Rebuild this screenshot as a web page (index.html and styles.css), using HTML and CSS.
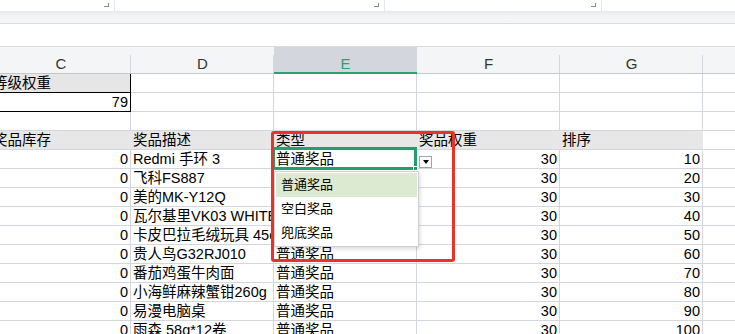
FILE: index.html
```html
<!DOCTYPE html>
<html lang="zh-CN">
<head>
<meta charset="utf-8">
<title>奖品配置</title>
<link rel="stylesheet" href="styles.css">
</head>
<body>
<div class="topstrip">
  <div class="ts ts1"><span class="mark"></span></div>
  <div class="ts ts2"><span class="mark"></span></div>
  <div class="ts ts3"><span class="mark"></span></div>
  <div class="ts ts4"></div>
</div>
<div class="band"></div>
<div class="blank"></div>

<div class="sheet">
  <div class="row hdr">
    <div class="c cC">C</div>
    <div class="c cD">D</div>
    <div class="c cE active">E</div>
    <div class="c cF">F</div>
    <div class="c cG">G</div>
    <div class="c cH"></div>
  </div>
  <div class="row">
    <div class="c cC t boxed fill">等级权重</div>
    <div class="c cD"></div><div class="c cE"></div><div class="c cF"></div><div class="c cG"></div><div class="c cH"></div>
  </div>
  <div class="row">
    <div class="c cC n boxed">79</div>
    <div class="c cD"></div><div class="c cE"></div><div class="c cF"></div><div class="c cG"></div><div class="c cH"></div>
  </div>
  <div class="row">
    <div class="c cC"></div><div class="c cD"></div><div class="c cE"></div><div class="c cF"></div><div class="c cG"></div><div class="c cH"></div>
  </div>
  <div class="row labels">
    <div class="c cC t">奖品库存</div>
    <div class="c cD t">奖品描述</div>
    <div class="c cE t">类型</div>
    <div class="c cF t">奖品权重</div>
    <div class="c cG t">排序</div>
    <div class="c cH"></div>
  </div>
  <div class="row"><div class="c cC n">0</div><div class="c cD t">Redmi 手环 3</div><div class="c cE t">普通奖品</div><div class="c cF n">30</div><div class="c cG n">10</div><div class="c cH"></div></div>
  <div class="row"><div class="c cC n">0</div><div class="c cD t">飞科FS887</div><div class="c cE t"></div><div class="c cF n">30</div><div class="c cG n">20</div><div class="c cH"></div></div>
  <div class="row"><div class="c cC n">0</div><div class="c cD t">美的MK-Y12Q</div><div class="c cE t"></div><div class="c cF n">30</div><div class="c cG n">30</div><div class="c cH"></div></div>
  <div class="row"><div class="c cC n">0</div><div class="c cD t">瓦尔基里VK03 WHITE</div><div class="c cE t"></div><div class="c cF n">30</div><div class="c cG n">40</div><div class="c cH"></div></div>
  <div class="row"><div class="c cC n">0</div><div class="c cD t">卡皮巴拉毛绒玩具 45cm</div><div class="c cE t"></div><div class="c cF n">30</div><div class="c cG n">50</div><div class="c cH"></div></div>
  <div class="row"><div class="c cC n">0</div><div class="c cD t">贵人鸟G32RJ010</div><div class="c cE t">普通奖品</div><div class="c cF n">30</div><div class="c cG n">60</div><div class="c cH"></div></div>
  <div class="row"><div class="c cC n">0</div><div class="c cD t">番茄鸡蛋牛肉面</div><div class="c cE t">普通奖品</div><div class="c cF n">30</div><div class="c cG n">70</div><div class="c cH"></div></div>
  <div class="row"><div class="c cC n">0</div><div class="c cD t">小海鲜麻辣蟹钳260g</div><div class="c cE t">普通奖品</div><div class="c cF n">30</div><div class="c cG n">80</div><div class="c cH"></div></div>
  <div class="row"><div class="c cC n">0</div><div class="c cD t">易漫电脑桌</div><div class="c cE t">普通奖品</div><div class="c cF n">30</div><div class="c cG n">90</div><div class="c cH"></div></div>
  <div class="row"><div class="c cC n">0</div><div class="c cD t">雨森 58g*12卷</div><div class="c cE t">普通奖品</div><div class="c cF n">30</div><div class="c cG n">100</div><div class="c cH"></div></div>
</div>

<div class="selection"><span class="handle"></span></div>
<div class="ddbtn"><span class="tri"></span></div>
<ul class="ddlist">
  <li class="item on">普通奖品</li>
  <li class="item">空白奖品</li>
  <li class="item">兜底奖品</li>
</ul>
<div class="annot"></div>
</body>
</html>
```
FILE: styles.css
```css
* { box-sizing: border-box; }
html, body { margin: 0; padding: 0; }
body {
  position: relative;
  width: 735px;
  height: 334px;
  overflow: hidden;
  background: #fff;
  font-family: "Liberation Sans", "Noto Sans CJK SC", sans-serif;
  font-size: 14.5px;
  color: #000;
}

/* top strip */
.topstrip { display: flex; height: 11px; }
.ts { display: flex; justify-content: flex-end; border-right: 1px solid #e6e7ea; height: 11px; }
.ts1 { width: 115px; }
.ts2 { width: 270px; }
.ts3 { width: 217px; }
.ts4 { flex: 1; border-right: none; }
.mark {
  width: 5px; height: 4px; margin-top: 3px; margin-right: 5px;
  border-right: 1px solid #8a8a8a; border-bottom: 1px solid #8a8a8a;
}
.band {
  height: 13px;
  background: linear-gradient(#e8e9ec, #f3f4f6 40%, #f5f6f8);
  border-bottom: 1px solid #d9dbdf;
}
.blank { height: 23px; border-bottom: 1px solid #d9dbdf; }

/* sheet */
.sheet { margin-left: -9px; }
.row { display: flex; height: 19px; }
.c {
  height: 100%;
  border-right: 1px solid #d3d6dd;
  border-bottom: 1px solid #d3d6dd;
  line-height: 19px;
  white-space: nowrap;
  overflow: hidden;
}
.cC { width: 140px; flex: none; }
.cD, .cE, .cF, .cG { width: 143px; flex: none; }
.cH { flex: 1; border-right: none; }
.t { padding-left: 2px; text-align: left; }
.n { padding-right: 2px; text-align: right; }

.hdr { height: 27px; }
.hdr .c {
  background: #f4f5f7 linear-gradient(#d3d6dd, #d3d6dd) no-repeat right bottom / 1px 18px;
  border-right: none;
  border-bottom: 1px solid #c3c7cf;
  text-align: center;
  line-height: 16px;
  padding-top: 9px;
  color: #333;
  font-size: 15px;
}
.hdr .active {
  background: #d3d6dd;
  color: #2aa271;
  border-bottom: 2px solid #2aa271;
}
.hdr .cH { background-image: none; }

.fill { background: #e6e6e6; }
.boxed { border-right-color: #000; border-bottom-color: #000; }

.labels .c { background: #e7e7e7; border-right-color: #e7e7e7; }
.labels .cH { background: #fff; }

/* overlays */
.selection {
  position: absolute;
  left: 272px; top: 147px;
  width: 145px; height: 23px;
  border: 3px solid #22a06b;
}
.handle {
  position: absolute;
  right: -4px; bottom: -4px;
  width: 5px; height: 5px;
  background: #22a06b;
  border: 1px solid #fff;
}
.ddbtn {
  position: absolute;
  left: 419px; top: 156px;
  width: 13px; height: 12px;
  border: 1px solid #9aa6b3;
  background: #fff;
  display: flex; align-items: center; justify-content: center;
}
.tri {
  width: 0; height: 0;
  border-left: 3.5px solid transparent;
  border-right: 3.5px solid transparent;
  border-top: 4px solid #000;
}
.ddlist {
  position: absolute;
  left: 274px; top: 171px;
  width: 145px; height: 76px;
  margin: 0; padding: 1px;
  list-style: none;
  background: #fff;
  border: 1px solid #cfd1d4;
  box-shadow: 1px 2px 4px rgba(0,0,0,0.15);
}
.item {
  height: 24px;
  line-height: 24px;
  padding-left: 5px;
  font-size: 13px;
}
.item.on { background: #dcead2; }
.annot {
  position: absolute;
  left: 271px; top: 131px;
  width: 184px; height: 131px;
  border: 3px solid #e8322b;
  border-radius: 3px;
}
```
